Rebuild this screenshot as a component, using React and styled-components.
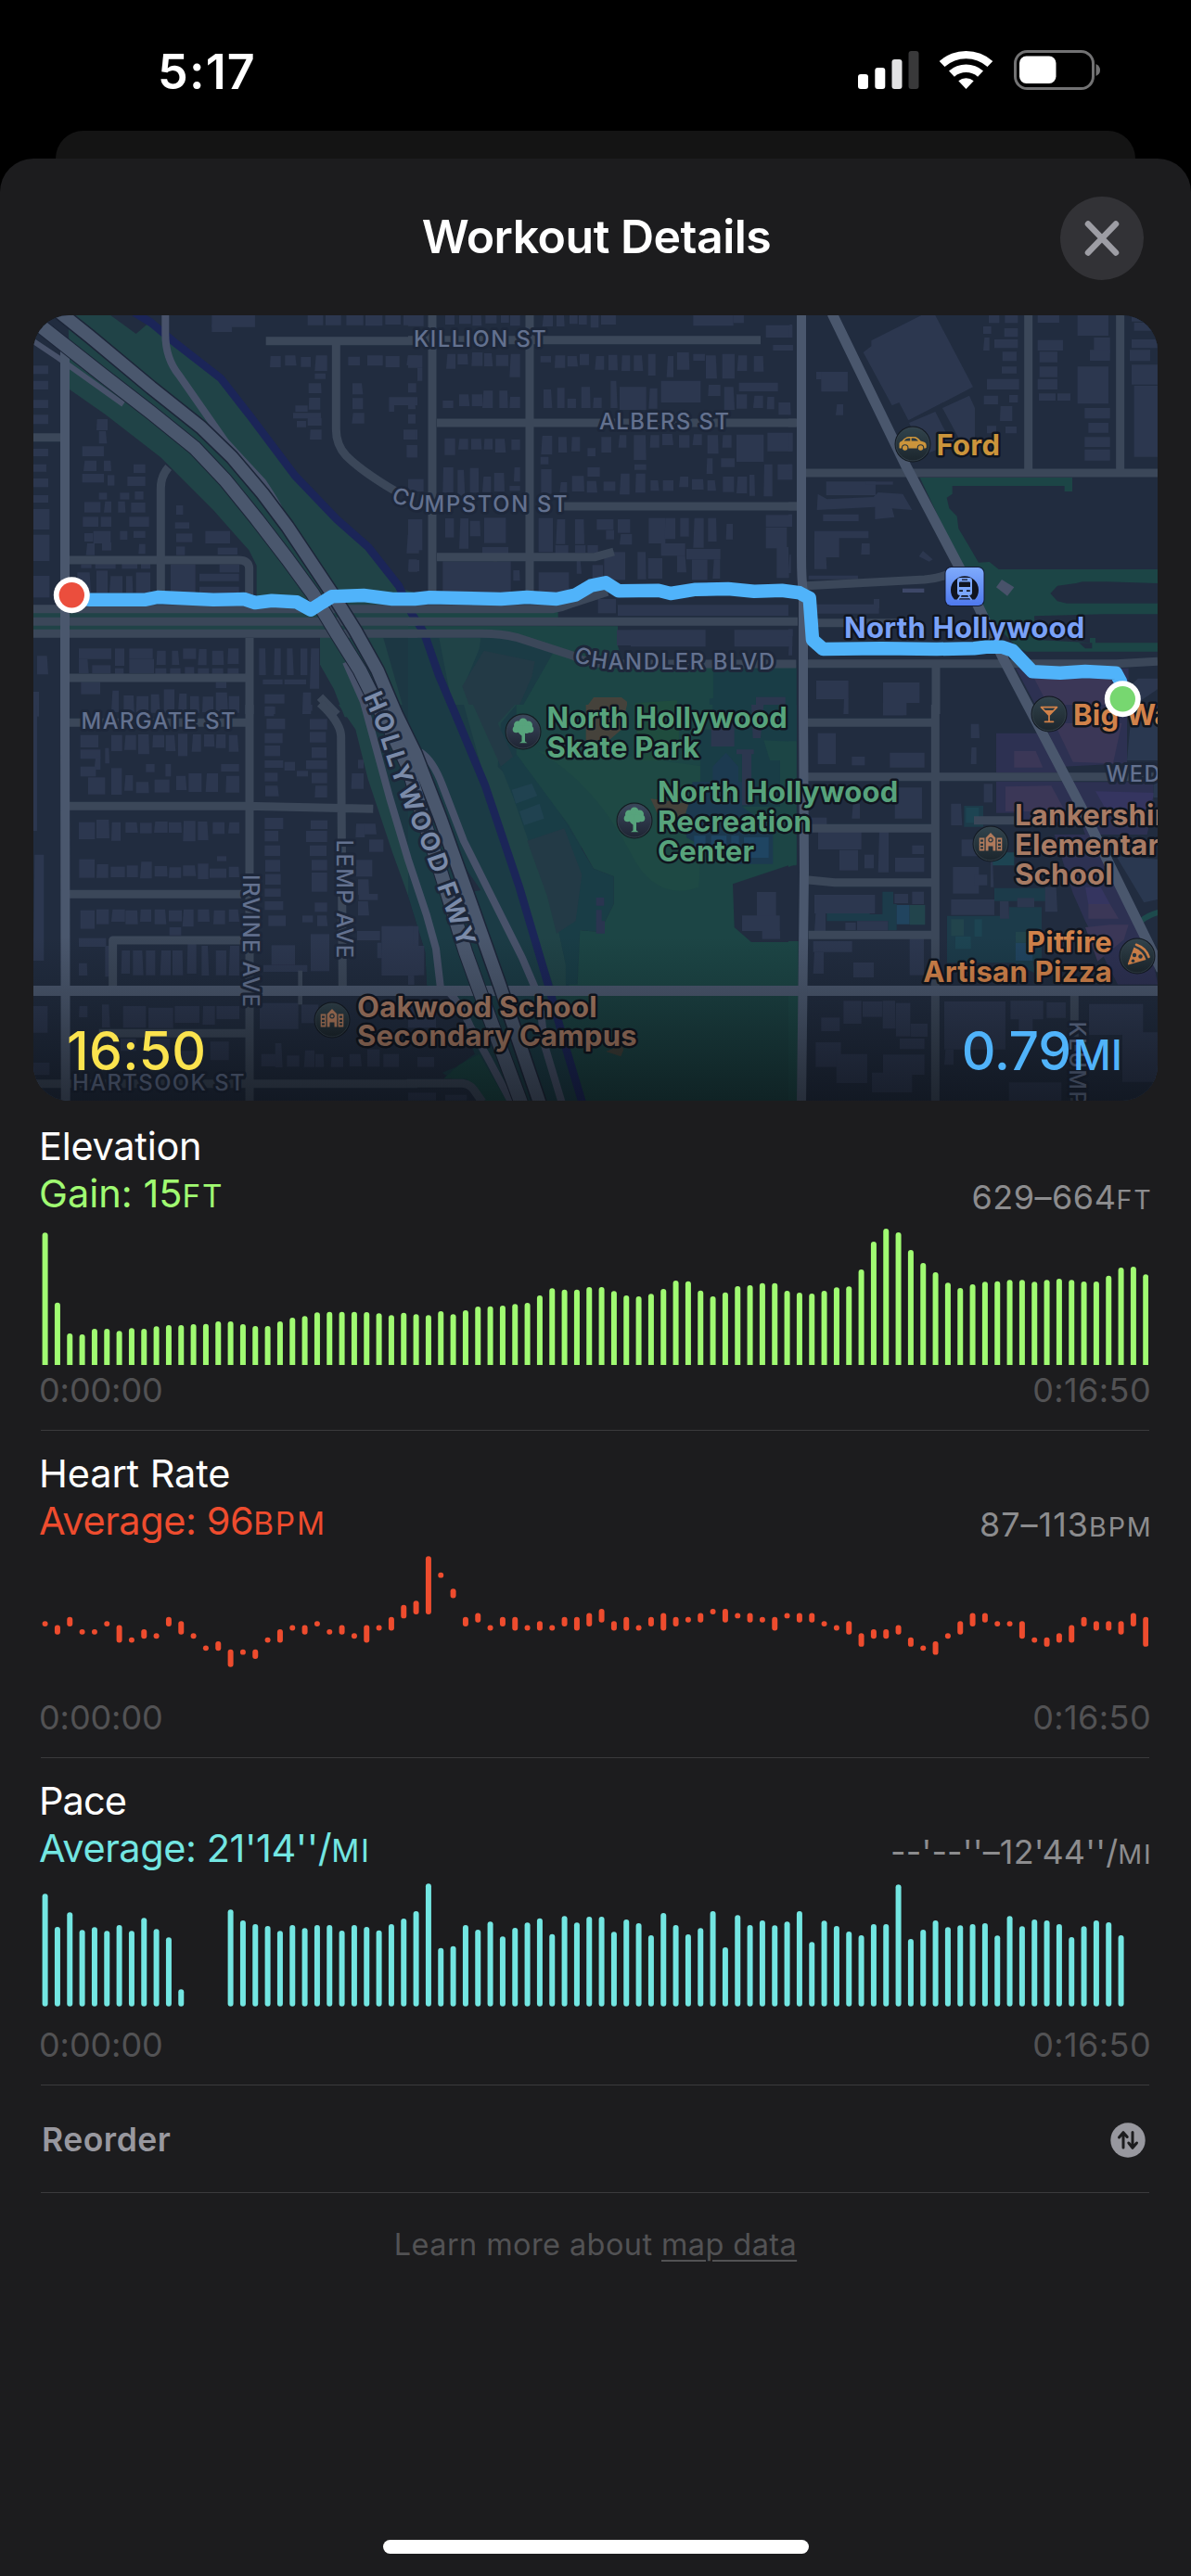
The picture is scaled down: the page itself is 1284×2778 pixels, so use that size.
import React from "react";
import styled, { createGlobalStyle } from "styled-components";

const Global = createGlobalStyle`
  html, body { margin: 0; background: #000; }
  body { font-family: Inter, "Liberation Sans", sans-serif; color: #fff; }
  * { box-sizing: border-box; }
`;

/* ---------- Shell ---------- */

const Screen = styled.div`
  width: 1284px;
  height: 2778px;
  background: #000;
  display: flex;
  flex-direction: column;
  overflow: hidden;
`;

const StatusBar = styled.header`
  height: 141px;
  flex: none;
  display: flex;
  justify-content: space-between;
  align-items: flex-start;
  padding: 45px 96px 0 170px;
`;

const Clock = styled.div`
  font-size: 52px;
  line-height: 66px;
  font-weight: 600;
  letter-spacing: 1.2px;
`;

const StatusIcons = styled.svg`
  display: block;
  width: 264px;
  height: 46px;
  margin-top: 7px;
`;

const BackSheet = styled.div`
  height: 30px;
  flex: none;
  margin: 0 60px;
  background: #141414;
  border-radius: 30px 30px 0 0;
`;

const Sheet = styled.main`
  flex: 1;
  min-height: 0;
  background: #1c1c1e;
  border-radius: 36px 36px 0 0;
  display: flex;
  flex-direction: column;
`;

const SheetHeader = styled.div`
  height: 169px;
  flex: none;
  display: grid;
  grid-template-columns: 90px 1fr 90px;
  align-items: start;
  padding: 41px 51px 0;
`;

const Title = styled.h1`
  grid-column: 2;
  margin: 0;
  padding-left: 2px;
  text-align: center;
  font-size: 50px;
  line-height: 86px;
  font-weight: 600;
  letter-spacing: -0.5px;
`;

const CloseButton = styled.button`
  width: 90px;
  height: 90px;
  border: 0;
  padding: 0;
  border-radius: 50%;
  background: #323236;
  display: flex;
  align-items: center;
  justify-content: center;
`;

/* ---------- Map ---------- */

const MapCard = styled.section`
  position: relative;
  flex: none;
  width: 1212px;
  height: 847px;
  margin: 0 36px;
  border-radius: 38px;
  overflow: hidden;
  background: #212c3f;
`;

const MapSvg = styled.svg`
  display: block;
  width: 1212px;
  height: 847px;
`;

const MapTotals = styled.div`
  position: absolute;
  left: 36px;
  right: 38px;
  bottom: 11px;
  display: flex;
  justify-content: space-between;
  align-items: baseline;
`;

const Total = styled.div`
  color: ${(p) => p.$color};
  font-size: 57px;
  line-height: 76px;
  font-weight: 500;
  letter-spacing: ${(p) => p.$track}px;
  white-space: nowrap;
`;

const TotalUnit = styled.span`
  font-size: 45px;
  letter-spacing: 0;
  margin-left: 2px;
`;

const StreetText = styled.text`
  font-size: ${(p) => p.$size || 23.8}px;
  font-weight: ${(p) => p.$weight || 500};
  letter-spacing: ${(p) => p.$track || 1.45}px;
  fill: ${(p) => p.$fill || "#63718f"};
  stroke: #1d273a;
  stroke-width: 6px;
  stroke-linejoin: round;
  paint-order: stroke;
`;

const PlaceText = styled.text`
  font-size: 31px;
  font-weight: 700;
  letter-spacing: 0.28px;
  fill: ${(p) => p.$fill};
  stroke: #10151f;
  stroke-width: 5px;
  stroke-linejoin: round;
  paint-order: stroke;
`;

/* The map is surveyed as six sheets, three columns by two rows, drawn at three units per pixel. */
const ORIGINS = {
  nw: [30, 330],
  n: [440, 330],
  ne: [850, 330],
  sw: [30, 760],
  s: [440, 760],
  se: [850, 760],
};

const MapSheet = ({ at, children }) => (
  <g transform={`translate(${ORIGINS[at][0]} ${ORIGINS[at][1]}) scale(0.33333)`}>{children}</g>
);

const BUILDINGS = {
  nw: "595,30,140,38;595,60,65,24;905,30,50,32;963,30,50,32;1030,30,55,32;1092,30,55,34;1156,30,50,30;1215,30,45,32;18,193,48,27;18,242,48,28;18,304,48,26;18,352,48,30;18,462,48,24;18,512,42,24;18,558,48,28;18,612,48,24;18,657,52,66;18,740,52,85;18,873,52,70;783,162,35,36;832,160,37,33;883,165,32,32;928,160,40,50;928,218,35,18;1036,164,38,28;1098,160,50,33;1157,162,45,36;1225,160,35,32;908,250,42,32;908,297,38,38;865,322,40,20;858,346,90,18;905,362,45,25;870,372,30,20;912,400,38,32;1050,250,34,36;1050,298,34,36;1048,346,40,34;1168,295,92,26;1168,320,17,22;1215,400,45,32;1225,450,35,40;1225,740,40,60;1232,820,28,40;222,366,36,36;230,405,26,40;176,454,70,32;180,500,42,34;246,500,24,34;342,512,38,28;176,543,70,28;258,547,22,34;322,552,58,30;230,604,26,22;298,604,30,22;346,600,28,26;183,634,52,34;246,632,24,36;292,632,24,36;334,636,46,32;178,682,50,32;236,682,34,32;328,682,64,32;183,735,28,27;212,728,56,40;298,728,24,28;342,728,38,22;188,768,28,38;240,765,30,26;358,770,22,32;480,645,22,30;476,700,46,20;480,736,52,28;574,728,80,40;480,778,28,28;614,782,64,22;172,836,34,12;218,834,66,16;304,834,50,16;366,834,30,16;160,862,44,66;222,856,36,72;264,874,42,54;318,874,22,54;350,862,46,66;462,836,80,92;620,836,64,26;555,866,128,24;555,908,128,20;165,1108,105,34;165,1142,32,46;282,1108,30,56;328,1108,76,34;328,1142,80,46;416,1115,30,46;466,1115,24,46;502,1108,42,34;550,1110,28,52;596,1115,38,46;646,1108,36,50;208,1162,60,26;282,1172,28,18;412,1172,36,18;460,1172,34,18;508,1168,30,22;550,1172,36,18;596,1172,36,18;646,1172,36,18;748,1108,22,86;796,1108,22,86;838,1108,22,86;882,1108,22,86;912,1108,30,130;760,1208,64,16;830,1208,70,16;172,1216,62,40;608,1216,34,20;270,1244,24,70;310,1260,34,54;350,1262,40,54;398,1256,30,60;440,1240,34,76;486,1254,28,60;525,1262,30,54;564,1264,36,50;608,1250,40,64;650,1262,34,54;766,1256,64,30;766,1296,34,24;888,1250,28,70;30,1132,36,60;18,1248,18,80",
  n: "0,30,50,35;120,30,30,30;165,30,38,28;208,30,30,34;250,30,36,26;300,30,26,24;330,30,32,34;434,30,34,36;480,30,26,36;522,30,26,28;552,30,26,30;590,30,26,40;624,30,48,30;922,30,130,34;1052,30,34,25;1157,62,86,40;1180,126,65,18;123,155,30,48;160,155,34,34;205,150,36,44;246,153,28,42;284,158,40,36;328,155,34,75;428,162,34,20;474,160,34,40;515,162,34,34;555,155,30,36;604,162,30,44;648,158,30,50;690,160,28,50;730,160,30,50;776,155,24,70;836,162,22,68;870,150,40,56;922,155,38,22;963,160,36,75;1016,155,40,80;1064,160,32,50;1118,162,32,50;112,306,34,24;165,286,34,38;206,286,34,38;240,274,34,56;295,274,28,56;328,294,34,36;438,270,28,60;482,265,24,65;515,300,28,30;560,262,30,68;598,296,28,34;655,242,22,88;684,262,86,74;778,266,28,66;818,242,128,70;970,255,40,36;1022,262,34,74;1062,286,34,46;1116,290,32,40;1070,248,126,28;1160,294,24,40;1198,312,38,40;118,428,34,54;162,430,32,34;204,430,34,34;245,430,28,34;282,430,34,44;334,432,28,34;430,420,36,60;486,424,28,50;528,424,28,46;580,460,26,26;625,424,32,50;680,418,26,40;730,418,40,80;782,418,30,40;822,414,36,36;876,418,34,40;920,415,30,35;968,418,36,60;1016,418,30,40;1062,416,88,88;1162,410,82,60;1012,493,44,28;428,488,26,24;112,522,34,82;160,530,24,84;200,524,28,80;240,552,28,50;278,540,34,60;342,522,20,46;328,582,34,16;430,528,34,80;490,570,24,34;530,550,40,50;580,522,40,30;578,566,34,38;632,568,38,30;684,542,32,68;732,512,38,18;735,542,32,62;784,564,28,34;824,564,34,34;876,552,30,34;918,560,38,34;965,493,20,50;968,564,28,34;1018,552,36,50;1062,552,34,54;1104,546,18,68;1150,512,28,104;1195,512,48,50;120,687,28,62;165,687,30,98;200,695,34,50;246,685,70,82;240,780,84,24;422,686,46,110;478,690,30,80;540,690,30,80;610,690,54,34;640,725,26,30;678,690,40,44;684,738,40,34;778,686,54,82;830,686,34,68;818,768,78,40;880,686,28,60;922,686,34,96;970,686,28,76;1028,705,22,50;1157,676,84,38;1157,716,68,68;900,786,110,34;1192,780,40,100;476,774,42,28;540,774,34,24;580,774,34,24;112,826,220,100;340,855,22,34;422,862,98,66;545,822,16,44;596,838,34,45;634,796,68,90;742,796,28,88;776,816,46,66;870,808,30,54;918,820,50,66;985,820,24,62;614,948,58,46;678,967,552,35;0,160,46,40;30,200,16,42;0,250,26,30;0,296,24,38;0,350,24,30;0,402,24,30;0,450,30,40;0,560,50,40;0,690,46,100;0,822,36,36;720,1048,242,54;675,1048,45,50;1055,1048,188,54",
  ne: "90,213,102,24;106,213,86,64;153,318,24,35;648,30,34,25;700,30,42,25;630,66,26,24;698,72,44,28;630,102,20,42;666,108,76,28;692,148,46,30;690,196,48,22;642,236,104,34;632,290,46,28;714,288,28,24;684,324,40,48;642,388,30,24;702,390,36,22;806,30,70,24;806,110,82,34;812,148,58,34;812,196,58,34;806,236,64,34;810,283,54,23;870,283,42,23;935,30,100,66;988,102,52,50;975,142,65,35;935,196,100,120;958,330,82,34;970,378,65,32;958,424,82,32;958,464,82,36;1110,30,84,20;1118,54,76,26;1110,108,84,28;1104,142,66,36;1110,190,84,64;1118,258,76,230;122,568,160,44;250,568,88,10;112,674,115,22;84,728,175,23;84,750,80,63;84,813,40,38;235,768,28,36;65,872,160,12;57,965,236,30;276,948,18,30;90,1212,104,60;178,1270,16,50;306,1218,118,66;306,1284,76,40;0,60,12,40;0,312,8,40;0,412,12,58;0,512,12,20;0,674,12,40;0,804,8,60;0,1045,14,24;0,1096,12,34",
  sw: "170,98,58,40;270,98,35,52;312,98,38,48;357,96,36,64;403,98,38,40;446,98,32,52;486,94,30,72;530,96,30,56;570,96,34,40;608,96,32,44;650,98,32,54;170,145,65,30;215,170,20,40;250,140,14,50;170,200,50,32;195,235,55,55;270,205,34,86;312,228,28,50;350,250,42,36;410,242,48,42;480,230,34,46;520,222,42,60;575,222,40,60;625,192,58,24;640,230,44,54;382,192,28,26;445,192,18,40;165,380,52,55;222,372,42,60;270,380,30,60;316,380,40,34;363,382,38,34;408,378,44,36;456,380,42,34;502,376,40,66;550,378,34,60;598,380,38,38;648,380,36,36;166,500,50,60;222,516,38,44;268,524,46,34;320,520,36,38;363,508,38,54;410,522,42,34;456,526,40,34;502,520,42,34;550,514,34,50;588,530,54,30;650,524,34,34;612,490,30,16;170,665,46,60;222,662,40,48;270,662,44,40;316,665,40,45;363,662,36,40;410,662,38,48;456,665,42,36;500,662,36,56;550,662,38,40;600,665,38,45;650,662,34,40;458,720,38,26;165,755,88,28;250,780,20,100;302,795,28,75;340,795,34,80;382,795,30,80;428,795,34,80;468,795,34,80;515,770,30,100;562,780,24,96;608,795,34,80;650,780,34,96;165,836,28,40;766,5,30,32;772,45,60,34;766,92,58,32;766,132,50,34;766,180,60,24;766,220,42,28;768,262,44,34;830,185,34,28;870,214,36,18;890,0,30,20;912,46,56,34;912,88,52,34;918,138,48,34;900,180,68,28;918,220,50,34;928,262,40,38;766,366,60,36;766,408,44,34;766,455,50,34;768,502,48,38;768,548,50,34;766,595,52,26;766,636,60,28;778,682,56,34;915,374,54,28;900,408,68,36;912,455,54,34;918,502,50,34;918,543,50,62;928,640,40,30;888,682,34,22;936,682,34,34;788,778,76,64;762,842,142,22;915,742,60,120;1060,385,30,44;1088,385,40,34;1104,436,46,40;1062,502,52,54;1068,565,36,50;1070,612,62,20;1068,636,36,46;1065,732,74,30;1144,716,120,160;1130,770,16,50;1046,222,40,50;1068,178,18,28;18,0,12,408;18,485,34,343;18,975,46,86;165,975,28,36;240,970,26,74;308,975,74,70;390,980,80,66;475,975,80,54;565,975,40,60;610,975,74,42;750,965,125,84;885,970,55,60;18,1158,52,40;755,1130,50,40;800,1095,24,78;838,1135,40,36;893,1118,34,54;930,1130,28,42;980,1140,40,32;1040,1130,40,40;1098,1115,40,56;1150,1130,50,42;300,1080,50,40;400,1080,60,36;480,1120,60,40;590,1090,60,60",
  s: "0,716,20,190;0,780,52,95;30,1140,54,32;0,975,90,70;0,1255,90,25;120,1262,70,18;1128,606,62,78;1080,682,122,50;1145,732,58,26",
  se: "95,92,58,100;205,168,42,28;328,155,112,48;590,62,28,46;590,138,18,54;306,0,66,34;344,268,88,100;205,320,26,48;72,365,52,22;96,408,140,60;165,470,60,66;246,485,30,44;290,410,34,132;345,495,94,46;400,455,38,28;526,320,36,70;632,256,28,60;560,436,60,54;532,525,84,86;600,550,43,34;654,490,10,100;84,615,196,60;84,675,36,60;184,705,34,24;222,700,100,30;343,612,44,30;400,605,38,40;526,630,140,50;684,636,30,56;740,625,55,30;830,590,40,80;80,765,126,35;80,800,34,70;210,834,66,48;392,755,46,120;106,1012,60,44;178,958,58,74;240,960,64,50;305,958,42,90;348,965,46,108;395,1032,55,42;360,1080,80,34;88,1092,82,80;155,1130,100,94;306,1132,134,65;270,1190,130,64;504,960,198,155;504,1115,30,50;718,958,106,60;745,1010,45,60;835,963,62,50;972,968,175,100;1080,1060,114,160;713,1222,170,59",
};

const Buildings = () =>
  Object.entries(BUILDINGS).map(([at, list]) => (
    <MapSheet key={at} at={at}>
      <g fill="#2c374f">
        {list.split(";").map((item, i) => {
          const [x, y, w, h] = item.split(",").map(Number);
          const skew = w < 45 && h > 30 ? ((i * 7) % 5) - 2 : 0;
          return (
            <path key={item} d={`M${x + Math.max(skew, 0) * 2} ${y}H${x + w + Math.min(skew, 0) * 2}L${x + w} ${y + h}H${x}Z`} />
          );
        })}
      </g>
    </MapSheet>
  ));

const Landcover = () => (
  <>
    <MapSheet at="nw">
      <path fill="#204347" d="M135 200L135 270L250 350L430 490L600 660L715 790L740 840V990H1260V930L1200 912L1100 780L1000 690L860 550L720 360L630 240L470 115L385 60L350 90L265 28L130 28Z" />
      <path fill="#204347" d="M18 990H1260V1050H18Z" />
      <path fill="#204347" d="M945 1074V1160L990 1240L1025 1330H1260V1040H945Z" />
      <path fill="#1c3743" d="M1150 1074H1260V1320H1220Z" />
    </MapSheet>
    <MapSheet at="n">
      <path fill="#1c4545" d="M0 988H485V1012H0Z" />
      <path fill="#1b3b45" d="M0 1036H480V1330H0Z" />
      <path fill="#1c4545" d="M0 1036H678V1100L700 1160H1255V1330H350L470 1120L330 1070L0 1050Z" />
      <path fill="#204347" d="M100 1074H235L230 1110L180 1230L215 1330H150Z" />
      <path fill="#233a46" d="M245 1115L410 1150L400 1200L345 1325H210L175 1230Z" />
      <path fill="#193d46" d="M987 1172H1255V1330H975V1270H987Z" />
      <path fill="#1f4c3e" d="M735 1285L870 1276V1330H735Z" />
      <path fill="#45423b" d="M575 1320V1300L600 1266H690L708 1280V1320Z" />
      <path fill="#2c374f" d="M1125 1265H1220V1310H1125Z" />
      <path fill="#33403f" d="M148 876H188V890H148ZM204 876H264V890H204ZM276 826H288V926H276Z" />
    </MapSheet>
    <MapSheet at="ne">
      <path fill="#1c4546" d="M425 555H918V600H893V582H530V608L512 620L520 655L545 680L550 720L580 770L615 830L650 828L680 852H1194V897L1030 892H950L930 897L870 905L847 930L870 955L900 962H1194V997H1020L795 1003L800 1080L985 1090H1194V1118H770L740 1105L640 1000L560 840Z" />
      <path fill="#1c4546" d="M975 1074H993V1092H975Z" />
      <path fill="#212c3f" d="M940 1090L960 1108H982V1090Z" />
      <path fill="#2c374f" d="M242 150L268 130V112L430 30H475L597 262L388 370L358 312L335 322ZM390 378L475 342L520 430H600V440L520 450L440 480ZM498 330L585 290L603 330V430H552ZM95 608L125 625L275 618L290 603L370 608L400 660L335 655L343 683L280 690V650L92 660ZM422 810L435 792L467 820L455 827Z" />
      <path fill="#2d3152" d="M735 1172H1100V1330H820Z" />
      <path fill="#3b3757" d="M795 1205H1045V1330H860Z" />
      <path fill="#2c374f" d="M1115 1220L1130 1205H1194V1240L1120 1290Z" />
      <path fill="#3d4768" d="M369 914H439V927H369Z" />
      <path fill="#48526a" d="M672 910L690 885L730 910L708 938Z" />
      <path fill="#193d46" d="M0 1172H25V1330H0Z" />
    </MapSheet>
    <MapSheet at="sw">
      <path fill="#204347" d="M1005 0L1060 80L1100 240L1180 480L1260 700V0Z" />
      <path fill="#1c3743" d="M1100 0H1260V600Z" />
    </MapSheet>
    <MapSheet at="s">
      <path fill="#1b3b45" d="M0 0H560V1285H250L110 1190L215 1130L60 905L55 800L0 620Z" />
      <path fill="#204347" d="M180 0H350L300 60L290 200L350 260L480 700L510 840V910H470L250 250Z" />
      <path fill="#233a46" d="M210 0H345L290 60L340 170L300 200Z" />
      <path fill="#193d46" d="M300 200L350 160L430 250L600 530L665 555V645L620 735L555 730L545 905H510V840L480 700L340 300Z" />
      <path fill="#1c4545" d="M350 0H1256V1285H560L520 905H548L556 730L620 735L665 645V555L600 530L520 390L350 160Z" />
      <path fill="#1e4944" d="M420 150Q600 250 720 480Q800 640 940 590L960 200L740 170Z" />
      <path fill="#233a46" d="M385 440L505 400L562 550L542 700L480 740L450 620Z" />
      <path fill="#204250" d="M335 275L400 255L418 295L348 320ZM360 345L425 320L440 368L375 390Z" />
      <path fill="#193d46" d="M985 0H1256V120L1150 115L1170 180H1203V330H985L945 250V80H985Z" />
      <path fill="#2c374f" d="M980 60H1055V135H980ZM1062 145H1118V160H1110V325H1080V160H1062ZM1110 0H1150L1140 108H1115Z" />
      <path fill="#1c3a50" d="M985 230V200L1028 155L1068 200V250H985ZM900 330L920 250H985V250H1080V330L1180 400V515H1060L900 430Z" />
      <path fill="#1f4562" d="M925 424H962V470H925ZM980 424H1030V470H980ZM1045 424H1070V470H1045ZM1086 428H1166V495H1086Z" />
      <path fill="#45423b" d="M575 0H708L690 80L650 115H575ZM784 304L908 320L890 370L820 380Z" />
      <path fill="#1f4c3e" d="M740 0H876V180H740Z" />
      <path fill="#2a3550" d="M608 624H634V650H608ZM608 664H626V700H636V740H608Z" />
      <path fill="#212c3f" d="M1050 580L1230 520H1260V768H1110L1055 720ZM180 520L235 600L205 605Z" />
      <path fill="#212c3f" d="M0 620L55 800L60 907H0ZM0 940H150L215 1130L160 1170L110 1190L118 1210L240 1240L250 1285H0Z" />
      <path fill="#1a4443" d="M165 1165L230 1130L320 1285H250L190 1210H115Z" />
      <path fill="#1b4142" d="M470 940H1256V1285H565Z" />
      <path fill="#3f3f38" d="M640 1122L690 1100L697 1115L688 1138Z" />
    </MapSheet>
    <MapSheet at="se">
      <path fill="#193d46" d="M0 0H26V118H0Z" />
      <path fill="#1c4545" d="M0 118H26V515L0 525ZM0 765H32V1285H0Z" />
      <path fill="#2d3152" d="M672 92H810L880 220H672ZM672 248H900L960 380H760L750 350H672ZM800 0H1095V190L890 200ZM900 250H1180V330L1160 420H960ZM860 420H990L1165 760L1195 905H1065L960 700L920 610Z" />
      <path fill="#3b3757" d="M860 60H1078L1050 190L920 185ZM730 150H800L823 203H730ZM702 265L850 262L895 345H702ZM970 645H1040L1068 692H970ZM960 720L1040 712H1100L1085 760L1000 830Z" />
      <path fill="#353560" d="M993 280L1185 285L1160 350L1030 345ZM960 590L1010 590L1040 645H970Z" />
      <path fill="#2a3850" d="M1110 20L1194 0V180H1095ZM1060 490L1194 500V630L1150 640ZM1180 200H1194V300H1180Z" />
      <path fill="#1c3b4a" d="M568 327H630V395H568ZM666 593H831V635H666ZM513 683H714V655H819V830H790L800 870L760 850L730 835H513ZM124 645H263V678H304V605H339V645H350V730H322V700H124Z" />
      <path fill="#21445f" d="M350 648H392V710H350ZM735 770H790V828H735Z" />
      <path fill="#22444c" d="M392 648H442V712H392ZM526 694H567V748H526ZM735 735H790V770H735Z" />
      <path fill="#1d4452" d="M540 750H590V790H540ZM602 694H626V750H602ZM574 333H616V382H574ZM654 478H730V520H654Z" />
      <path fill="none" stroke="#1d4a4c" strokeWidth="18" d="M1140 700Q1165 680 1196 672" />
    </MapSheet>
    <path
      fill="none"
      stroke="#1b2558"
      strokeWidth="8.500"
      strokeLinejoin="round"
      d="M145 337L163 348L190 370.700L238 408L270.700 450L318 513L363 560L397 590L430 632L444 662L457 682L473 728L490 768L523 847L560 957L591 1062L610 1130L628 1190"
    />
  </>
);

const MINOR = "#3b4759";
const MAJOR = "#4a576d";
const RAMP = "#48526a";

const Roads = () => (
  <g fill="none" strokeLinejoin="round">
    <g stroke={MINOR} strokeWidth="27">
      <MapSheet at="nw">
        <path d="M770 113H1260M997 113V400Q997 450 1030 485Q1080 535 1190 600M18 425H106M430 930V590Q430 550 455 522M135 822H680Q716 822 716 850V980M18 980H1260M18 1021H1260M18 1060H1260M717 1074V1320M135 1203H705M945 1265L1000 1322" />
      </MapSheet>
      <MapSheet at="n">
        <path d="M0 110H1140M78 30V960M393 30V960M93 378H1255M500 648H1260M93 812H605L665 795M0 980H470Q500 975 530 962L645 925M0 1021H1260M0 1060H240Q300 1060 350 1072L530 1130Q580 1158 650 1158H1255" />
      </MapSheet>
      <MapSheet at="ne">
        <path d="M57 540H1194M776 30V540M1073 30V540M0 378H28M0 648H28M57 905L440 885Q500 880 530 860M57 1025H400M57 1157H1060L1194 1150M477 1165V1320" />
      </MapSheet>
      <MapSheet at="sw">
        <path d="M135 58H705M135 328H705L1117 337M135 613H690M275 910V762H690M717 0V1285M945 -5Q1010 55 1013 100L1018 910M230 1063H705M18 1226H1260" />
        <path strokeWidth="14" d="M881 860V970" />
      </MapSheet>
      <MapSheet at="s">
        <path d="M-5 1225H175Q200 1228 212 1245L240 1285" />
      </MapSheet>
      <MapSheet at="se">
        <path d="M57 58H462M57 233H1194M57 400H462M65 567L150 575H462M65 745H462M475 0V1285M925 940V1285M600 374H730" />
      </MapSheet>
    </g>
    <g stroke={RAMP} strokeWidth="8">
      <path d="M178.300 338V360Q178.300 386.700 193.300 405L243.300 476.700L283.300 520Q296.700 540 302 551" />
      <path d="M36 368L63 386L133 436" strokeWidth="6" />
      <path d="M373 714L392 757L420 860L440 927L460 987L470 1023L475 1066M484 1070Q497 1083 507 1107L527 1143L552 1190" />
      <path d="M453 811Q467 820 477 847L500 907L530 967L563 1033L578 1068M583 1090L587 1127L606 1190" />
    </g>
    <g stroke={MAJOR}>
      <path strokeWidth="11" d="M36 1068.500H1250M897 338L977 503L1037 617L1083 713L1113 770L1167 873L1252 1046" />
      <path strokeWidth="10" d="M70 370V760L70.700 1190M864 338V600Q864 625 866 640V760L867 940L864 1190" />
    </g>
    <g strokeLinejoin="round">
      <g stroke="#1c2538">
        <path strokeWidth="16.500" d="M43 351L110 404L163 445L210 483L243 518L277 560L310 603L337 640L363 683L388 723L405 757L425 795L440 827L456 882L475 940L502 1027L515 1063L562 1190" />
        <path strokeWidth="16.500" d="M57 331L97 363L163 418L217 461L250 493L283 532L310 568L340 613L358 640L383 680L407 723L427 770L448 813L475 883L505 967L539 1063L582 1190" />
      </g>
      <g stroke={MAJOR}>
        <path strokeWidth="14.500" d="M43 351L110 404L163 445L210 483L243 518L277 560L310 603L337 640L363 683L388 723L405 757L425 795L440 827L456 882L475 940L502 1027L515 1063L562 1190" />
        <path strokeWidth="13.500" d="M57 331L97 363L163 418L217 461L250 493L283 532L310 568L340 613L358 640L383 680L407 723L427 770L448 813L475 883L505 967L539 1063L582 1190" />
      </g>
    </g>
  </g>
);

const STREETS = [
  ["KILLION ST", 446, 374],
  ["ALBERS ST", 646, 462.7],
  ["MARGATE ST", 87.5, 786],
  ["HARTSOOK ST", 78, 1175.7],
  ["WEDDINGTON", 1192.5, 843.3],
];
const AVENUES = [
  ["LEMP AVE", 362.5, 905.5],
  ["IRVINE AVE", 262, 943],
  ["KLUMP AVE", 1153, 1101.5],
];

const StreetLabels = () => (
  <>
    {STREETS.map(([name, x, y]) => (
      <StreetText key={name} x={x} y={y}>{name}</StreetText>
    ))}
    {AVENUES.map(([name, x, y]) => (
      <StreetText key={name} transform={`translate(${x} ${y}) rotate(90)`}>{name}</StreetText>
    ))}
    <path id="cumpston" fill="none" d="M421 540Q442 550 462 551.700H660" />
    <StreetText $track={1.65}><textPath href="#cumpston">CUMPSTON ST</textPath></StreetText>
    <path id="chandler" fill="none" d="M618 713Q640 721 664 721.700H880" />
    <StreetText $track={1.65}><textPath href="#chandler">CHANDLER BLVD</textPath></StreetText>
    <path id="freeway" fill="none" d="M392 751L407 786L420 827L436 870L457 916L475 966L500 1036" />
    <StreetText $size={27.5} $weight={700} $track={3.2} $fill="#7a8aa8"><textPath href="#freeway">HOLLYWOOD FWY</textPath></StreetText>
  </>
);

const Tree = ({ fill }) => (
  <g fill={fill}>
    <circle cx="-5.500" cy="-7" r="4.500" /><circle cx="0" cy="-10" r="4.500" /><circle cx="5.500" cy="-7" r="4.500" />
    <circle cx="-7.500" cy="-2.500" r="3.800" /><circle cx="7.500" cy="-2.500" r="3.800" /><circle cx="-2" cy="-2.500" r="4.500" /><circle cx="3.500" cy="-2.500" r="4.500" />
    <path d="M-1 0L-5 1.500L-1.500 4.500V10.500L-4 12.300H4.500L2 10.500V0Z" />
  </g>
);

const School = ({ fill }) => (
  <g fill={fill}>
    <path fillRule="evenodd" d="M-5.300 -6.500L0 -12L5.300 -6.500V7.500H2.500V2.500H-2.500V7.500H-5.300ZM0 -7A2.800 2.800 0 1 0 0.010 -7Z" />
    <circle cx="0" cy="-4.200" r="1.500" />
    <path fillRule="evenodd" d="M-12.300 -6.500H-6.600V7.500H-12.300ZM-11 -4.500V-2.300H-8V-4.500ZM-11 -0.300V1.900H-8V-0.300ZM-11 3.500V5.500H-8V3.500Z" />
    <path fillRule="evenodd" d="M12.300 -6.500H6.600V7.500H12.300ZM11 -4.500V-2.300H8V-4.500ZM11 -0.300V1.900H8V-0.300ZM11 3.500V5.500H8V3.500Z" />
  </g>
);

const Car = ({ fill }) => (
  <g fill={fill}>
    <path fillRule="evenodd" d="M-14.500 4V-1Q-14 -3 -11.500 -3.500Q-8 -8 -4 -8H2Q5 -8 8.500 -3.500L12.500 -2.300Q14.700 -1.500 14.700 1V3.500Q14.500 4.500 13 4.500H-13Q-14.500 4.500 -14.500 4ZM-9.500 -3.500H-2.800V-6.500H-4.500Q-7.500 -6.300 -9.500 -3.500ZM-1.300 -6.500V-3.500H6Q3.500 -6.500 1.500 -6.500Z" />
    <circle cx="-8.300" cy="4" r="3.800" fill="#26343d" /><circle cx="8.500" cy="4" r="3.800" fill="#26343d" />
    <circle cx="-8.300" cy="4" r="2.700" /><circle cx="8.500" cy="4" r="2.700" />
  </g>
);

const Cocktail = ({ fill }) => (
  <g fill="none" stroke={fill} strokeWidth="1.700" strokeLinecap="round" strokeLinejoin="round">
    <path d="M-8.500 -7.300H8.500L0 1.500ZM0 1.500V8M-4.500 8.300H4.500" />
    <path fill={fill} stroke="none" d="M-5.500 -4H5.500L0 1.500Z" />
  </g>
);

const Pizza = ({ fill }) => (
  <g>
    <path fill={fill} d="M-3.500 -9.500Q6.500 -5.500 9.500 4L-9.500 9.500Q-10.500 9.300 -10 8Z" />
    <path fill="none" stroke={fill} strokeWidth="2.600" strokeLinecap="round" d="M-1 -12.200Q9.500 -8.500 12.500 1" />
    <g fill="#26343d"><circle cx="-3" cy="-1" r="2.200" /><circle cx="3.500" cy="0.500" r="2.200" /><circle cx="-4.500" cy="5.300" r="1.800" /></g>
  </g>
);

const PLACES = [
  { icon: Tree, at: [564, 789], fill: "#57a37c", text: [589.500, 785], lines: ["North Hollywood", "Skate Park"], badge: "cool" },
  { icon: Tree, at: [684, 885], fill: "#57a37c", text: [709, 865], lines: ["North Hollywood", "Recreation", "Center"], badge: "cool" },
  { icon: School, at: [358, 1100], fill: "#b07a5c", text: [385, 1096.500], lines: ["Oakwood School", "Secondary Campus"] },
  { icon: Car, at: [984, 479], fill: "#cb943b", text: [1009.500, 491.300], lines: ["Ford"] },
  { icon: Cocktail, at: [1131, 770], fill: "#d1824a", text: [1157, 782], lines: ["Big Wangs"] },
  { icon: School, at: [1068, 910], fill: "#b07a5c", text: [1094, 890.300], lines: ["Lankershim", "Elementary", "School"] },
  { icon: Pizza, at: [1226, 1031], fill: "#d1824a", text: [1199, 1027.300], lines: ["Pitfire", "Artisan Pizza"], end: true },
];

const Places = () =>
  PLACES.map(({ icon: Icon, at, fill, text, lines, end, badge }) => (
    <g key={lines.join(" ") + at[0]}>
      <g transform={`translate(${at[0]} ${at[1]})`}>
        <circle r="19.500" fill="#131a22" />
        <circle r="18" fill={`url(#badge-${badge || "warm"})`} stroke="#3c4a55" strokeWidth="0.700" />
        <Icon fill={fill} />
      </g>
      {lines.map((line, i) => (
        <PlaceText key={line} $fill={Icon === School ? "#a87b64" : fill} x={text[0]} y={text[1] + i * 31.800} textAnchor={end ? "end" : "start"}>
          {line}
        </PlaceText>
      ))}
    </g>
  ));

const Station = () => (
  <g>
    <rect x="1018.500" y="611" width="43" height="43" rx="7" fill="#131b33" />
    <rect x="1019.500" y="612" width="41" height="41" rx="6" fill="url(#station)" />
    <g transform="translate(1040 633)">
      <path fill="#10141f" d="M-11 13.500A15 15 0 1 1 11 13.500Z" />
      <path fill="none" stroke="#7ba6fb" strokeWidth="1.600" d="M-4 9L-7.500 14M4 9L7.500 14M-5.500 11.500H5.500" />
      <path fill="#7ba6fb" fillRule="evenodd" d="M-5 -10H5Q8 -10 8 -7V6Q8 9 5 9H-5Q-8 9 -8 6V-7Q-8 -10 -5 -10ZM-3 -8.500V-7.300H3V-8.500ZM-5 -5.500Q-6 -5.500 -6 -4.500V0H6V-4.500Q6 -5.500 5 -5.500ZM-5.800 3.300V5H-2V3.300ZM2 3.300V5H5.800V3.300Z" />
    </g>
    <PlaceText $fill="#7aa2f8" x="910" y="687.700">North Hollywood</PlaceText>
  </g>
);

const ROUTE =
  "M80 645L97 646.700L157 646.700L170 644L230 646.700L263 646L275 650L293 647.700L320 649.300L335 657.700L347 650L358 643.300L392 642L423 646L447 646L463 644.300L540 646L568 644L600 646L620 641.700L637 631.700L653 628.300L667 637.300L710 636.700L723 640L750 635.700L785 635L813 637.700L843 636.700L862 639.300L872.700 645L876 690L887.300 700L950 699.300L1010 700L1050 699.300L1063 697.700H1080L1091.700 701.700L1113 724.300L1143 725.700L1170 724L1203 725.700L1208 735L1211 750";

const RouteMap = () => (
  <MapSvg viewBox="36 340 1212 847" role="img" aria-label="Workout route">
    <defs>
      <linearGradient id="fade" x1="0" y1="0" x2="0" y2="1">
        <stop offset="0" stopColor="#05070a" stopOpacity="0" />
        <stop offset="0.400" stopColor="#05070a" stopOpacity="0.180" />
        <stop offset="1" stopColor="#05070a" stopOpacity="0.520" />
      </linearGradient>
      <linearGradient id="badge-warm" x1="0" y1="0" x2="0" y2="1">
        <stop offset="0" stopColor="#31434c" /><stop offset="1" stopColor="#1c262d" />
      </linearGradient>
      <linearGradient id="badge-cool" x1="0" y1="0" x2="0" y2="1">
        <stop offset="0" stopColor="#3a475c" /><stop offset="1" stopColor="#1f2534" />
      </linearGradient>
      <linearGradient id="station" x1="0" y1="0" x2="0" y2="1">
        <stop offset="0" stopColor="#7fabfc" /><stop offset="1" stopColor="#4f79ee" />
      </linearGradient>
    </defs>
    <rect x="36" y="340" width="1212" height="847" fill="#212c3f" />
    <Landcover />
    <Buildings />
    <Roads />
    <StreetLabels />
    <Places />
    <Station />
    <rect x="36" y="1010" width="1212" height="177" fill="url(#fade)" />
    <path d={ROUTE} fill="none" stroke="#50b3fa" strokeWidth="14.500" strokeLinejoin="round" />
    <circle cx="77.300" cy="641.700" r="19.500" fill="#fff" />
    <circle cx="77.300" cy="641.700" r="13.700" fill="#eb4e3d" />
    <circle cx="1210.300" cy="753.700" r="19.500" fill="#fff" />
    <circle cx="1210.300" cy="753.700" r="13.700" fill="#77d770" />
  </MapSvg>
);

/* ---------- Metrics ---------- */

const MetricList = styled.div`
  flex: none;
  padding-top: 3px;
`;

const Metric = styled.section`
  height: 353px;
  margin: 0 45px 0 44px;
  padding-top: 21px;
  border-bottom: 1px solid #3a3a3c;
  display: flex;
  flex-direction: column;
`;

const MetricTitle = styled.h2`
  margin: 0 0 0 -2px;
  font-size: 41.5px;
  line-height: 50px;
  font-weight: 400;
  letter-spacing: ${(p) => p.$track}px;
`;

const MetricLine = styled.div`
  display: flex;
  justify-content: space-between;
  align-items: flex-start;
  height: 51px;
  margin: 0 -2px 0 -2px;
  white-space: nowrap;
`;

const Summary = styled.div`
  color: ${(p) => p.$color};
  font-size: 41.5px;
  line-height: 53px;
  letter-spacing: ${(p) => p.$track}px;
`;

const Range = styled.div`
  color: #8c8c8e;
  font-size: 36px;
  line-height: 60px;
  letter-spacing: ${(p) => p.$track}px;
`;

const Unit = styled.span`
  font-size: ${(p) => p.$size}px;
  letter-spacing: 1.8px;
  margin-right: -1.5px;
`;

const Chart = styled.svg`
  display: block;
  flex: none;
  width: 1194px;
  height: 160px;
`;

const TimeAxis = styled.div`
  display: flex;
  justify-content: space-between;
  margin: 7px -2px 0 -2px;
  color: #525254;
  font-size: 36px;
  line-height: 40px;
`;

const TimeMark = styled.span`
  letter-spacing: ${(p) => p.$track}px;
`;

const STEP = 13.333;
const barX = (i) => 4.6 + i * STEP;

const ELEVATION = [388, 614, 714, 717, 699, 699, 706, 697, 699, 691, 687, 687, 684, 683, 675, 675, 684, 690, 690, 675, 663, 658, 646, 644, 644, 644, 645, 649, 655, 647, 652, 655, 642, 652, 639, 627, 626, 624, 619, 615, 591, 568, 572, 572, 564, 564, 577, 591, 594, 586, 570, 543, 545, 575, 594, 581, 561, 558, 551, 551, 576, 582, 585, 576, 565, 562, 507, 417, 375, 387, 444, 486, 516, 550, 567, 555, 547, 545, 541, 541, 547, 541, 537, 541, 546, 546, 527, 501, 498, 523].map((v) => (816 - v) / 3);

/* [highest, lowest] beats per minute in each interval */
const HEART = [[0, 0], [1, 1], [-1, 1], [2, 0], [2, 0], [0, 0], [1, 3], [4, 0], [2, 1], [3, 0], [-1, 1], [0, 2], [3, 0], [6, 0], [5, 1], [7, 3], [7, 0], [7, 1], [4, 0], [2, 2], [1, 0], [1, 1], [0, 0], [2, 0], [1, 1], [3, 0], [1, 3], [1, 0], [-1, 2], [-4, 2], [-5, 2], [-16, 13], [-12, 0], [-8, 1], [-1, 1], [-2, 1], [1, 0], [-1, 1], [-1, 2], [1, 0], [0, 1], [1, 0], [-1, 1], [-1, 2], [-2, 2], [-3, 2], [0, 1], [-1, 2], [1, 0], [-1, 1], [-2, 3], [-1, 1], [-1, 0], [-2, 1], [-3, 0], [-3, 2], [-2, 0], [-2, 1], [-1, 0], [-1, 2], [-2, 0], [-2, 1], [-2, 1], [0, 0], [1, 0], [0, 2], [3, 2], [2, 1], [2, 1], [1, 1], [4, 1], [6, 0], [5, 2], [3, 0], [0, 2], [-2, 2], [-2, 1], [0, 0], [0, 0], [0, 3], [4, 0], [4, 1], [3, 1], [1, 3], [-1, 1], [0, 1], [0, 1], [0, 2], [-2, 2], [-1, 6]].map(([drop, span]) => [97 - drop, 97 - drop - span]);

const PACE = [427, 534, 487, 544, 535, 547, 528, 547, 505, 541, 568, 736, 0, 0, 0, 478, 513, 525, 531, 547, 528, 538, 528, 528, 546, 528, 534, 545, 525, 507, 483, 394, 602, 596, 528, 543, 517, 565, 537, 520, 506, 557, 499, 520, 501, 501, 550, 510, 522, 561, 489, 528, 558, 538, 483, 600, 496, 528, 513, 529, 517, 483, 583, 514, 531, 549, 561, 525, 525, 397, 573, 543, 513, 535, 529, 525, 522, 562, 499, 532, 510, 513, 525, 567, 532, 513, 519, 561].map((v) => (v ? (791 - v) / 3 : 0));

const ElevationBars = () => (
  <Chart viewBox="0 0 1194 160" fill="#a0fb72">
    {ELEVATION.map((h, i) => (
      <path key={i} d={`M${barX(i) - 3} 160V${163 - h}a3 3 0 0 1 6 0V160Z`} />
    ))}
  </Chart>
);

const HeartBars = () => (
  <Chart viewBox="0 0 1194 160" fill="#ee4c2e">
    {HEART.map(([high, low], i) => (
      <rect key={i} x={barX(i) - 3} y={13.300 + (113 - high) * 4.370} width="6" height={5.800 + (high - low) * 4.370} rx="2.900" />
    ))}
  </Chart>
);

const PaceBars = () => (
  <Chart viewBox="0 0 1194 160" fill="#73e6e2">
    {PACE.map((h, i) => h > 0 && <rect key={i} x={barX(i) - 3} y={145.700 - h} width="6" height={h} rx="3" />)}
  </Chart>
);

const METRICS = [
  { title: "Elevation", titleTrack: -0.29, color: "#a0fb72", summary: "Gain: 15", unit: "FT", track: 0, range: "629–664", rangeTrack: 0.5, Bars: ElevationBars },
  { title: "Heart Rate", titleTrack: -0.1, color: "#ee4c2e", summary: "Average: 96", unit: "BPM", track: -0.45, range: "87–113", rangeTrack: 1, Bars: HeartBars },
  { title: "Pace", titleTrack: -0.9, color: "#73e6e2", summary: "Average: 21'14''/", unit: "MI", track: -0.45, range: "--'--''–12'44''/", rangeTrack: 0.15, Bars: PaceBars },
];

/* ---------- Footer ---------- */

const ReorderRow = styled.div`
  flex: none;
  height: 116px;
  margin: 0 45px 0 44px;
  padding: 2px 4px 0 1px;
  border-bottom: 1px solid #3a3a3c;
  display: flex;
  align-items: center;
  justify-content: space-between;
  color: #98989f;
  font-size: 35.5px;
  font-weight: 600;
  letter-spacing: 0.5px;
`;

const MapDataNote = styled.p`
  flex: none;
  margin: 36px 0 0;
  text-align: center;
  color: #525254;
  font-size: 32.5px;
  line-height: 40px;
  letter-spacing: 0.4px;
`;

const MapDataLink = styled.a`
  text-decoration: underline;
  text-decoration-thickness: 2px;
  text-underline-offset: 5px;
`;

const HomeIndicator = styled.div`
  flex: none;
  width: 459px;
  height: 15px;
  margin: auto auto 24px;
  border-radius: 8px;
  background: #fff;
`;

export default function App() {
  return (
    <Screen>
      <Global />
      <StatusBar>
        <Clock>5:17</Clock>
        <StatusIcons viewBox="924 52 264 46">
          <g fill="#fff">
            <rect x="925" y="80" width="11" height="16" rx="3" />
            <rect x="943.300" y="73" width="11" height="23" rx="3" />
            <rect x="961.500" y="64" width="11" height="32" rx="3" fill="#e2e2e3" />
            <rect x="979.500" y="55" width="11" height="41" rx="3" fill="#39393a" />
            <path d="M1041.500 96L1033.300 87.300A12.500 12.500 0 0 1 1049.700 87.300Z" />
            <path d="M1028.900 82.700A19.500 19.500 0 0 1 1054.100 82.700L1060 76.500A28 28 0 0 0 1023 76.500Z" />
            <path d="M1018.500 72A34.500 34.500 0 0 1 1064.500 72L1070.300 66A43 43 0 0 0 1012.700 66Z" />
            <rect x="1099" y="60.500" width="39.500" height="29.500" rx="7.500" />
          </g>
          <rect x="1094.500" y="55.500" width="84" height="40" rx="13" fill="none" stroke="#727273" strokeWidth="3" />
          <path d="M1181.500 69Q1186 71 1186 75.500T1181.500 82Z" fill="#727273" />
        </StatusIcons>
      </StatusBar>
      <BackSheet />
      <Sheet>
        <SheetHeader>
          <Title>Workout Details</Title>
          <CloseButton aria-label="Close">
            <svg width="40" height="40" viewBox="-20 -20 40 40" fill="none" stroke="#9d9da4" strokeWidth="6.500" strokeLinecap="round">
              <path d="M-15 -15.500L15 15.500M15 -15.500L-15 15.500" />
            </svg>
          </CloseButton>
        </SheetHeader>
        <MapCard>
          <RouteMap />
          <MapTotals>
            <Total $color="#fbe34e" $track={0.3}>16:50</Total>
            <Total $color="#50b3fa" $track={-0.4}>0.79<TotalUnit>MI</TotalUnit></Total>
          </MapTotals>
        </MapCard>
        <MetricList>
          {METRICS.map(({ title, titleTrack, color, summary, unit, track, range, rangeTrack, Bars }) => (
            <Metric key={title}>
              <MetricTitle $track={titleTrack}>{title}</MetricTitle>
              <MetricLine>
                <Summary $color={color} $track={track}>{summary}<Unit $size={33.3}>{unit}</Unit></Summary>
                <Range $track={rangeTrack}>{range}<Unit $size={28.7}>{unit}</Unit></Range>
              </MetricLine>
              <Bars />
              <TimeAxis>
                <TimeMark $track={-0.1}>0:00:00</TimeMark>
                <TimeMark $track={0.4}>0:16:50</TimeMark>
              </TimeAxis>
            </Metric>
          ))}
        </MetricList>
        <ReorderRow>
          Reorder
          <svg width="38" height="38" viewBox="-19 -19 38 38">
            <circle r="18.700" fill="#98989f" />
            <path d="M-5 8V-8M-9.500 -3L-5 -8.300L-0.800 -3.500M5 -8.500V8M0.800 3L5 8.300L9.500 3" fill="none" stroke="#1c1c1e" strokeWidth="3" strokeLinecap="round" strokeLinejoin="round" />
          </svg>
        </ReorderRow>
        <MapDataNote>Learn more about <MapDataLink>map data</MapDataLink></MapDataNote>
        <HomeIndicator />
      </Sheet>
    </Screen>
  );
}
